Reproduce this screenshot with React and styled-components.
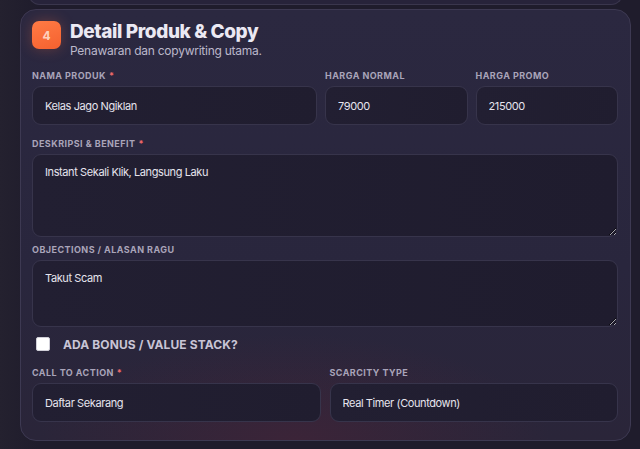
import React from "react";
import styled, { createGlobalStyle } from "styled-components";

const Global = createGlobalStyle`
  html, body { margin: 0; padding: 0; }
  body {
    background: #211e2f;
    font-family: Inter, "Noto Sans", sans-serif;
    color: #e8e6f0;
    overflow: hidden;
  }
`;

const Page = styled.div`
  width: 640px;
  height: 449px;
  overflow: hidden;
  background: linear-gradient(90deg, #24212f 0%, #1f1c2c 6%, #1f1c2c 100%);
  display: flex;
  flex-direction: column;
`;

const PrevCard = styled.div`
  height: 40px;
  margin: -36px 17px 0 28px;
  border: 1px solid #3a364d;
  border-top: none;
  border-radius: 0 0 12px 12px;
  background: #27233a;
`;

const Card = styled.section`
  margin: 4px 9px 0 20px;
  height: 432px;
  box-sizing: border-box;
  border: 1px solid #3d3952;
  border-radius: 16px;
  padding: 11px 12px 0 11px;
  background:
    radial-gradient(ellipse 60% 35% at 45% 100%, rgba(80, 35, 55, 0.45), transparent 70%),
    linear-gradient(180deg, #2b2840 0%, #29263d 60%, #2a2539 100%);
  display: flex;
  flex-direction: column;
`;

const Header = styled.div`
  display: flex;
  align-items: flex-start;
  gap: 9px;
`;

const Badge = styled.div`
  width: 29px;
  height: 28px;
  border-radius: 7px;
  background: linear-gradient(160deg, #ff7b45 0%, #f5612f 100%);
  box-shadow: 0 0 14px rgba(255, 110, 60, 0.28);
  display: flex;
  align-items: center;
  justify-content: center;
  color: rgba(255, 235, 225, 0.8);
  font-weight: 700;
  font-size: 12px;
`;

const TitleBlock = styled.div`
  display: flex;
  flex-direction: column;
`;

const Title = styled.h2`
  margin: 0;
  font-size: 19px;
  line-height: 22px;
  font-weight: 800;
  letter-spacing: -0.4px;
  color: #ebe9f3;
`;

const Subtitle = styled.p`
  margin: 0;
  font-size: 12px;
  line-height: 15px;
  color: #bcb8cb;
  letter-spacing: -0.25px;
`;

const Field = styled.div`
  display: flex;
  flex-direction: column;
  margin-top: ${(p) => p.$top || 0}px;
`;

const Label = styled.label`
  font-size: 9px;
  line-height: 12px;
  font-weight: 700;
  letter-spacing: 0.45px;
  color: #a9a4b9;
  text-transform: uppercase;
  margin-bottom: 4px;
`;

const Req = styled.span`
  color: #f06a6a;
  margin-left: 3px;
`;

const Grid = styled.div`
  display: grid;
  grid-template-columns: ${(p) => p.$cols};
  column-gap: ${(p) => p.$gap || 8}px;
  margin-top: ${(p) => p.$top || 0}px;
`;

const Input = styled.input`
  box-sizing: border-box;
  width: 100%;
  height: 39px;
  border-radius: 9px;
  border: 1px solid #37344b;
  background: linear-gradient(90deg, #221f32, #201d2f);
  color: #e6e4ee;
  font-family: Inter, "Noto Sans", sans-serif;
  font-size: 11px;
  letter-spacing: -0.4px;
  padding: 0 12px;
  outline: none;
`;

const TextArea = styled.textarea`
  display: block;
  box-sizing: border-box;
  width: 100%;
  height: ${(p) => p.$h}px;
  border-radius: 9px;
  border: 1px solid #37344b;
  background: linear-gradient(90deg, #221f32, #1f1c2e);
  color: #e6e4ee;
  font-family: Inter, "Noto Sans", sans-serif;
  font-size: 11px;
  line-height: 15px;
  letter-spacing: -0.4px;
  padding: 10px 12px;
  outline: none;
  resize: vertical;
`;

const CheckRow = styled.label`
  display: flex;
  align-items: center;
  gap: 13px;
  margin-top: ${(p) => p.$top || 0}px;
  padding-left: 4px;
  height: 14px;
`;

const Box = styled.span`
  width: 14px;
  height: 14px;
  border-radius: 2px;
  background: #ffffff;
  border: 1px solid #d0cfd8;
  box-sizing: border-box;
`;

const CheckText = styled.span`
  font-size: 12px;
  font-weight: 700;
  letter-spacing: 0.1px;
  color: #c8c4d5;
`;

export default function App() {
  return (
    <>
      <Global />
      <Page>
        <PrevCard />
        <Card>
          <Header>
            <Badge>4</Badge>
            <TitleBlock>
              <Title>Detail Produk &amp; Copy</Title>
              <Subtitle>Penawaran dan copywriting utama.</Subtitle>
            </TitleBlock>
          </Header>

          <Grid $cols="2fr 1fr 1fr" $gap={8} $top={12}>
            <Field>
              <Label>Nama Produk<Req>*</Req></Label>
              <Input defaultValue="Kelas Jago Ngiklan" />
            </Field>
            <Field>
              <Label>Harga Normal</Label>
              <Input defaultValue="79000" />
            </Field>
            <Field>
              <Label>Harga Promo</Label>
              <Input defaultValue="215000" />
            </Field>
          </Grid>

          <Field $top={13}>
            <Label>Deskripsi &amp; Benefit<Req>*</Req></Label>
            <TextArea $h={83} defaultValue="Instant Sekali Klik, Langsung Laku" />
          </Field>

          <Field $top={7}>
            <Label>Objections / Alasan Ragu</Label>
            <TextArea $h={67} defaultValue="Takut Scam" />
          </Field>

          <CheckRow $top={10}>
            <Box />
            <CheckText>ADA BONUS / VALUE STACK?</CheckText>
          </CheckRow>

          <Grid $cols="1fr 1fr" $gap={9} $top={16}>
            <Field>
              <Label>Call to Action<Req>*</Req></Label>
              <Input defaultValue="Daftar Sekarang" />
            </Field>
            <Field>
              <Label>Scarcity Type</Label>
              <Input defaultValue="Real Timer (Countdown)" />
            </Field>
          </Grid>
        </Card>
      </Page>
    </>
  );
}
